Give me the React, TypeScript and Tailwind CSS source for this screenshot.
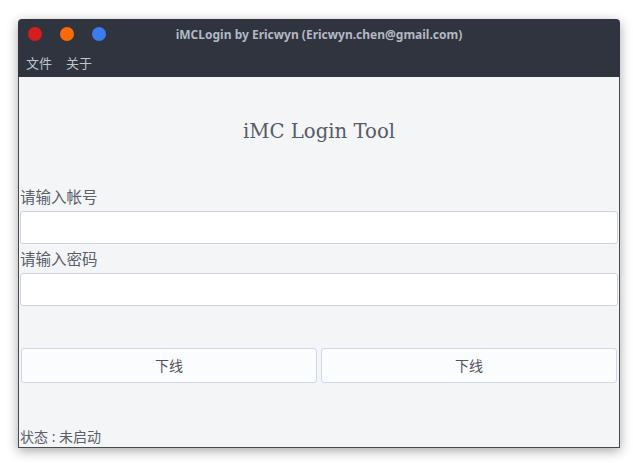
import React from "react";

const cjk = { fontFamily: '"Noto Sans", "Noto Sans CJK SC", sans-serif' };

export default function App() {
  return (
    <div className="w-[633px] h-[463px] bg-white pl-[18px] pt-[19px]">
      <div className="w-[602px] h-[429px] flex flex-col rounded-t-[4px] shadow-[0_3px_12px_rgba(0,0,0,0.35)]" style={cjk}>
        <div className="bg-[#2f343f] rounded-t-[4px] h-[58px] flex flex-col">
          <div className="h-[31px] relative flex items-center justify-center">
            <div className="absolute left-[10px] top-[8px] flex gap-[18px]">
              <span className="w-[14px] h-[14px] rounded-full bg-[#d41e1e]" />
              <span className="w-[14px] h-[14px] rounded-full bg-[#fc6a05]" />
              <span className="w-[14px] h-[14px] rounded-full bg-[#3b7cf0]" />
            </div>
            <span className="text-[12px] font-bold text-[#b3b8c3] leading-none">
              iMCLogin by Ericwyn (Ericwyn.chen@gmail.com)
            </span>
          </div>
          <div className="flex gap-[14px] pl-[8px] text-[13px] text-[#bfc4cd] leading-[27px]">
            <span>文件</span>
            <span>关于</span>
          </div>
        </div>
        <div className="flex-1 flex flex-col bg-[#f4f5f7] border-x border-b border-[#474a4f]">
          <h1
            className="mt-[41px] text-center text-[19.7px] leading-[28px] text-[#565c68]"
            style={{ fontFamily: '"DejaVu Serif", serif' }}
          >
            iMC Login Tool
          </h1>
          <label className="mt-[41px] ml-[1px] text-[15.5px] leading-[21px] text-[#5a5f69]">请输入帐号</label>
          <input className="mt-[3px] mx-[1px] h-[33px] bg-white border border-[#cdd4e0] rounded-[3px] outline-none" />
          <label className="mt-[5px] ml-[1px] text-[15.5px] leading-[21px] text-[#5a5f69]">请输入密码</label>
          <input
            type="password"
            className="mt-[3px] mx-[1px] h-[33px] bg-white border border-[#cdd4e0] rounded-[3px] outline-none"
          />
          <div className="mt-[42px] ml-[2px] mr-[2px] flex gap-[4px]">
            <button className="flex-1 h-[35px] bg-[#fbfcfd] border border-[#cfd8e8] rounded-[3px] text-[14px] text-[#4f545e]">
              下线
            </button>
            <button className="flex-1 h-[35px] bg-[#fbfcfd] border border-[#cfd8e8] rounded-[3px] text-[14px] text-[#4f545e]">
              下线
            </button>
          </div>
          <div className="mt-auto ml-[1px] text-[14px] leading-[20px] text-[#5a5f69]">状态 : 未启动</div>
        </div>
      </div>
    </div>
  );
}
